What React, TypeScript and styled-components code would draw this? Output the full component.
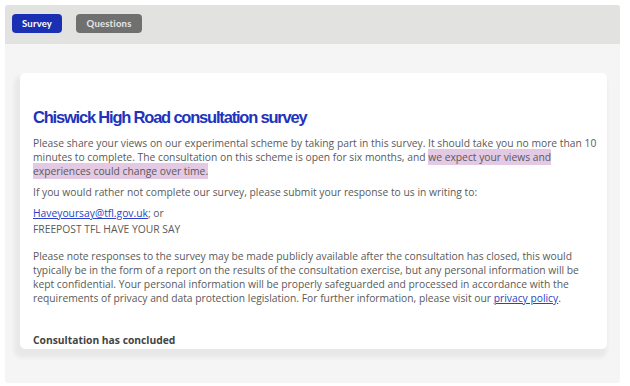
import React from 'react';
import styled, {createGlobalStyle} from 'styled-components';

const GlobalStyle = createGlobalStyle`
  html, body {
    margin: 0;
    padding: 0;
    background: #ffffff;
  }
  * {
    box-sizing: border-box;
  }
`;

type TabKind = 'active' | 'idle';

export default function App() {
  return (
    <>
      <GlobalStyle />
      <Page>
        <Frame>
          <TopBar>
            <TabButton $kind="active">Survey</TabButton>
            <TabButton $kind="idle">Questions</TabButton>
          </TopBar>
          <Body>
            <Card>
              <Title>Chiswick High Road consultation survey</Title>
              <Paragraph>
                Please share your views on our experimental scheme by taking part in this survey. It
                should take you no more than 10 minutes to complete. The consultation on this scheme is
                open for six months, and{' '}
                <Highlight>we expect your views and experiences could change over time.</Highlight>
              </Paragraph>
              <Paragraph>
                If you would rather not complete our survey, please submit your response to us in
                writing to:
              </Paragraph>
              <Paragraph $gap={2}>
                <Link href="#">Haveyoursay@tfl.gov.uk</Link>; or
              </Paragraph>
              <Paragraph $gap={13}>FREEPOST TFL HAVE YOUR SAY</Paragraph>
              <Paragraph>
                Please note responses to the survey may be made publicly available after the consultation
                has closed, this would typically be in the form of a report on the results of the
                consultation exercise, but any personal information will be kept confidential. Your
                personal information will be properly safeguarded and processed in accordance with the
                requirements of privacy and data protection legislation. For further information, please
                visit our <Link href="#">privacy policy</Link>.
              </Paragraph>
              <Status>Consultation has concluded</Status>
            </Card>
          </Body>
        </Frame>
      </Page>
    </>
  );
}

const Page = styled.div`
  width: 630px;
  height: 386px;
  padding: 5px 10px 3px 5px;
`;

const Frame = styled.div`
  display: flex;
  flex-direction: column;
  height: 100%;
  border-radius: 3px;
  overflow: hidden;
  background: #f5f5f5;
`;

const TopBar = styled.div`
  display: flex;
  align-items: center;
  gap: 14px;
  height: 39px;
  padding: 0 0 2px 7px;
  background: #e2e2e0;
`;

const TabButton = styled.button<{$kind: TabKind}>`
  height: 19px;
  padding: 0 10px;
  border: none;
  border-radius: 4px;
  font-family: Lato, 'Open Sans', sans-serif;
  font-size: 9.5px;
  font-weight: 700;
  letter-spacing: 0.2px;
  color: ${(p) => (p.$kind === 'active' ? '#ffffff' : '#e6e6e6')};
  background: ${(p) => (p.$kind === 'active' ? '#1b2fb2' : '#707070')};
  min-width: ${(p) => (p.$kind === 'active' ? 50 : 66)}px;
`;

const Body = styled.div`
  flex: 1;
  padding: 29px 13px 0 15px;
`;

const Card = styled.div`
  background: #ffffff;
  border-radius: 5px;
  padding: 34px 10px 2px 13px;
  box-shadow: -3px 6px 4px 3px rgba(0, 0, 0, 0.05);
  font-family: 'Open Sans', sans-serif;
  font-size: 10.3px;
  line-height: 14px;
  color: #5a5a5a;
`;

const Title = styled.h1`
  margin: 0 0 9px;
  font-family: 'Liberation Sans', Arial, sans-serif;
  font-size: 16.5px;
  line-height: 20px;
  font-weight: 700;
  letter-spacing: -1.2px;
  color: #2233bb;
`;

const Paragraph = styled.p<{$gap?: number}>`
  margin: 0 0 ${(p) => p.$gap ?? 7}px;
`;

const Highlight = styled.span`
  background: #e3c9e3;
  padding: 1px 0;
`;

const Link = styled.a`
  color: #2b3fc7;
  text-decoration: underline;
`;

const Status = styled.div`
  margin-top: 28px;
  font-weight: 700;
  color: #444444;
`;
